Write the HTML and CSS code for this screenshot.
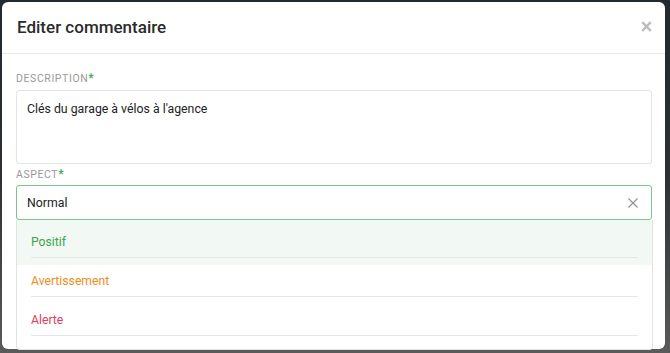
FILE: index.html
```html
<!DOCTYPE html>
<html lang="fr">
<head>
<meta charset="utf-8">
<link rel="stylesheet" href="styles.css">
</head>
<body>
<div class="modal">
  <div class="modal-header">
    <h2 class="modal-title">Editer commentaire</h2>
    <svg class="modal-close" width="11" height="11" viewBox="0 0 11 11"><path d="M1.2 1.2L9.8 9.8M9.8 1.2L1.2 9.8" stroke="#bdbdbd" stroke-width="2.4" fill="none"/></svg>
  </div>
  <div class="modal-body">
    <label class="field-label">Description<span class="req">*</span></label>
    <div class="textarea">Clés du garage à vélos à l'agence</div>
    <label class="field-label aspect">Aspect<span class="req">*</span></label>
    <div class="select-wrap">
      <div class="select">
        <span>Normal</span>
        <svg class="clear" width="10" height="10" viewBox="0 0 10 10"><path d="M0.5 0.5L9.5 9.5M9.5 0.5L0.5 9.5" stroke="#8f8f8f" stroke-width="1.1" fill="none"/></svg>
      </div>
      <div class="menu">
        <div class="opt positive active"><span class="opt-label">Positif</span></div>
        <div class="opt warning"><span class="opt-label">Avertissement</span></div>
        <div class="opt alert"><span class="opt-label">Alerte</span></div>
      </div>
    </div>
  </div>
</div>
</body>
</html>
```
FILE: styles.css
```css
html, body {
  margin: 0;
  padding: 0;
}
body {
  background: linear-gradient(to bottom, #22292f 0%, #2c3034 50%, #5a5a5a 100%);
  padding: 2px 5px 4px 2px;
  width: 670px;
  height: 353px;
  box-sizing: border-box;
  font-family: Roboto, "Liberation Sans", sans-serif;
  overflow: hidden;
}
.modal {
  width: 663px;
  height: 347px;
  background: #fff;
  border-radius: 6px;
  box-sizing: border-box;
  display: flex;
  flex-direction: column;
}
.modal-header {
  height: 52px;
  flex: none;
  border-bottom: 1px solid #e8e8e8;
  display: flex;
  align-items: center;
  justify-content: space-between;
  padding: 0 13px 2px 15px;
  box-sizing: border-box;
}
.modal-title {
  margin: 0;
  font-size: 17px;
  font-weight: 500;
  color: #2b2b2b;
}
.modal-close {
  display: block;
}
.modal-body {
  padding: 17px 13px 0 14px;
  width: 663px;
  box-sizing: border-box;
}
.field-label {
  display: block;
  font-size: 10.5px;
  letter-spacing: 0.6px;
  text-transform: uppercase;
  color: #9a9a9a;
  line-height: 14px;
  margin-bottom: 4px;
}
.req {
  color: #3fae4f;
  font-weight: bold;
  font-size: 12px;
}
.textarea {
  height: 74px;
  border: 1px solid #e3e3e3;
  border-radius: 3px;
  padding: 11px 10px 10px;
  box-sizing: border-box;
  font-size: 12.3px;
  color: #222;
}
.aspect {
  margin-top: 3px;
  margin-bottom: 3px;
}
.select-wrap {
  width: 636px;
}
.select {
  height: 35px;
  border: 1.5px solid #7cc58a;
  border-radius: 3px;
  display: flex;
  align-items: center;
  justify-content: space-between;
  padding: 0 13px 0 10px;
  box-sizing: border-box;
  font-size: 12.3px;
  color: #222;
}
.clear {
  display: block;
}
.menu {
  width: 637px;
  box-sizing: border-box;
  padding: 0 0 6px;
  border: 1px solid #e2e2e2;
  border-top: none;
  border-radius: 0 0 4px 4px;
  background: #fff;
}
.opt {
  padding: 0 14px 7px;
  font-size: 12.2px;
}
.opt-label {
  display: flex;
  align-items: center;
  height: 32px;
  box-sizing: border-box;
  border-bottom: 1px solid #e6e6e6;
  padding-top: 1px;
}
.opt.active {
  background: #f2f8f3;
  padding-top: 6px;
}
.positive { color: #3ca64c; }
.warning { color: #f08c1c; }
.alert { color: #e23c5c; }
```
